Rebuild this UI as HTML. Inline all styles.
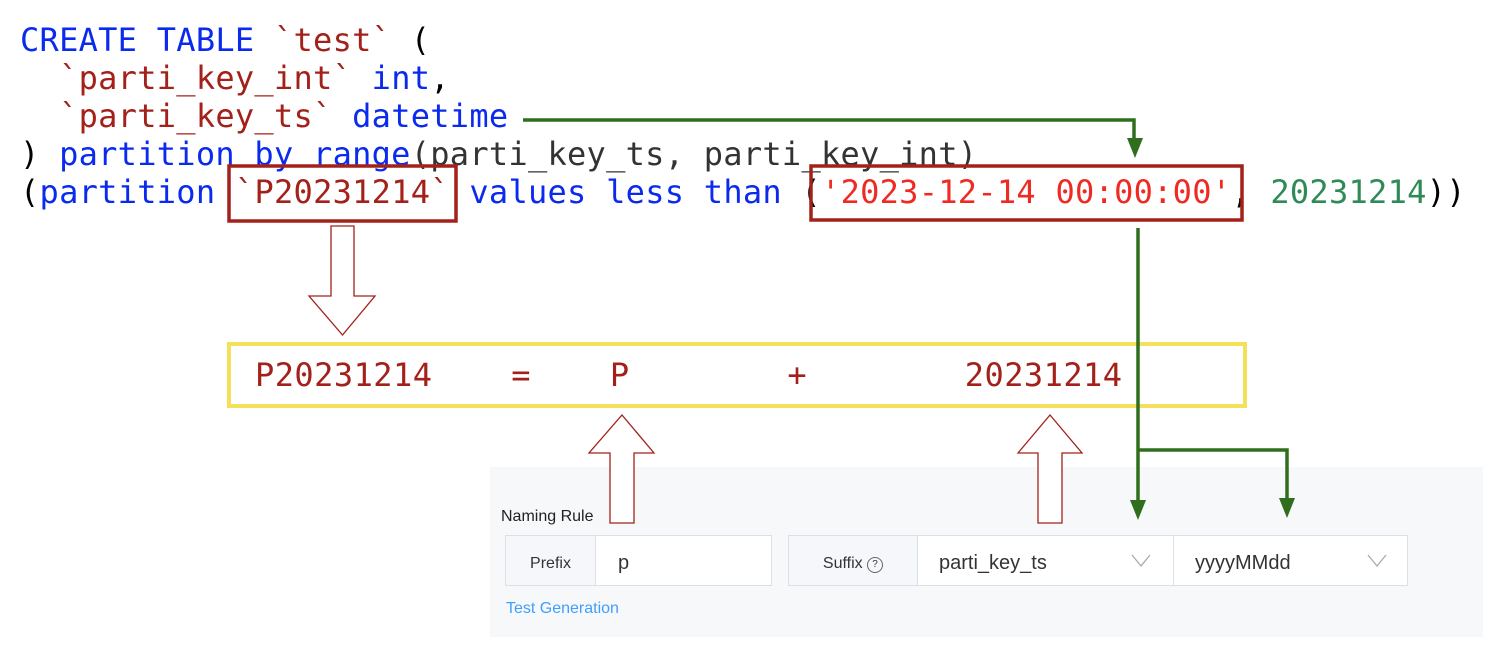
<!DOCTYPE html>
<html><head><style>
body{margin:0;width:1510px;height:666px;background:#fff;position:relative;overflow:hidden;font-family:"Liberation Sans",sans-serif}
.code{position:absolute;left:20px;top:21px;font-family:"DejaVu Sans Mono",monospace;font-size:32px;line-height:38px;white-space:pre;color:#000;letter-spacing:.27px}
.b{color:#0a2aee}.r{color:#a3211a}.s{color:#ee2a22}.g{color:#2e8b57}.k{color:#333}
.panel{position:absolute;left:490px;top:467px;width:993px;height:170px;background:#f7f8fa}
.lbl{position:absolute;font-size:15px;color:#222}
.box{position:absolute;top:535px;height:51px;border:1px solid #dcdfe6;background:#fff;box-sizing:border-box}
.addon{position:absolute;top:0;height:49px;background:#f5f7fa;border-right:1px solid #dcdfe6;font-size:16px;color:#333;line-height:55px;text-align:center}
.val{position:absolute;font-size:20px;color:#333;line-height:55px}
</style></head><body>
<div class="code"><span class="b">CREATE TABLE</span> <span class="r">`test`</span> (
  <span class="r">`parti_key_int`</span> <span class="b">int</span>,
  <span class="r">`parti_key_ts`</span> <span class="b">datetime</span>
) <span class="b">partition by range</span><span class="k">(parti_key_ts, parti_key_int)</span>
(<span class="b">partition</span> <span class="r">`P20231214`</span> <span class="b">values less than</span> (<span class="s">'2023-12-14 00:00:00'</span>, <span class="g">20231214</span>))</div>

<div class="panel"></div>
<div class="lbl" style="left:501px;top:508px;font-size:16px">Naming Rule</div>
<div class="box" style="left:505px;width:267px"><div class="addon" style="left:0;width:89px">Prefix</div><div class="val" style="left:112px">p</div></div>
<div class="box" style="left:788px;width:620px">
<div class="addon" style="left:0;width:128px">Suffix <span style="display:inline-block;width:14px;height:14px;border:1px solid #666;border-radius:50%;font-size:10px;line-height:14px;vertical-align:1px">?</span></div>
<div class="val" style="left:150px">parti_key_ts</div>
<div style="position:absolute;left:384px;top:0;width:1px;height:49px;background:#dcdfe6"></div>
<div class="val" style="left:406px">yyyyMMdd</div>
</div>
<div class="lbl" style="left:506px;top:600px;color:#409eff;font-size:16px">Test Generation</div>

<div style="position:absolute;left:227px;top:342px;width:1020px;height:66px;border:4px solid #f5e05a;box-sizing:border-box"></div>
<div style="position:absolute;left:255px;top:356px;font-family:'DejaVu Sans Mono',monospace;font-size:32px;color:#a3211a;white-space:pre;letter-spacing:.45px">P20231214    =    P        +        20231214</div>

<svg width="1510" height="666" style="position:absolute;left:0;top:0">
<g fill="none" stroke="#a3211a" stroke-width="3.5">
<rect x="229" y="166" width="227" height="55"/>
<rect x="811" y="166" width="431" height="54"/>
</g>
<g fill="#fff" stroke="#a3211a" stroke-width="1.3">
<path d="M331 226H354V296H375L342.5 335L309 296H331Z"/>
<path d="M622 415L654 453H634V523H610V453H589Z"/>
<path d="M1050 415L1082 453H1062V523H1038V453H1018Z"/>
</g>
<g fill="none" stroke="#2f6e1c" stroke-width="3.5">
<path d="M523 120H1134V140"/>
<path d="M1138 228V505"/>
<path d="M1138 450H1287V500"/>
</g>
<g fill="#2f6e1c">
<path d="M1127 138H1143L1135 158Z"/>
<path d="M1130 500H1146L1138 520Z"/>
<path d="M1279 498H1295L1287 518Z"/>
</g>
<g fill="none" stroke="#aaa" stroke-width="1.3">
<path d="M1132 555L1141 566L1150 555"/>
<path d="M1368 555L1377 566L1386 555"/>
</g>
</svg>
</body></html>
